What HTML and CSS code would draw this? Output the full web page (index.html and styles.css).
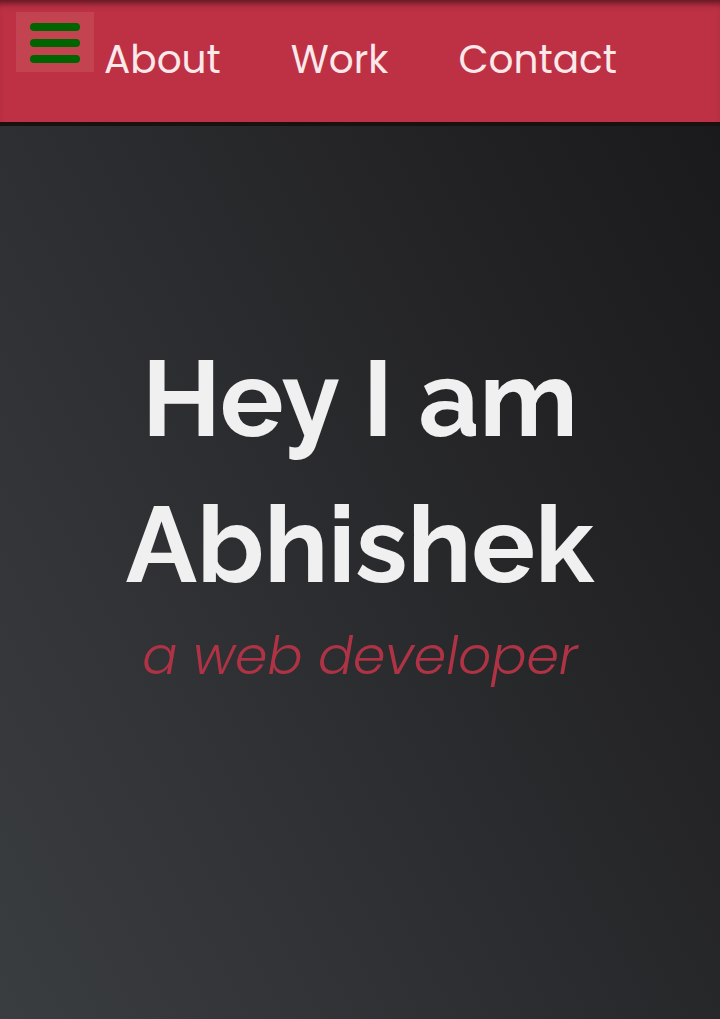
FILE: index.html
```html
<!DOCTYPE html>
<html lang="en">
<head>
<meta charset="utf-8">
<meta name="viewport" content="width=device-width, initial-scale=1">
<title>Abhishek</title>
<link rel="stylesheet" href="styles.css">
</head>
<body>
<header class="navbar">
  <button class="menu-toggle" type="button" aria-label="Menu">
    <span class="menu-bar"></span>
    <span class="menu-bar"></span>
    <span class="menu-bar"></span>
  </button>
  <nav class="nav-links">
    <a class="nav-link" href="#about">About</a>
    <a class="nav-link" href="#work">Work</a>
    <a class="nav-link" href="#contact">Contact</a>
  </nav>
</header>
<main class="hero">
  <h1 class="hero-title">Hey I am Abhishek</h1>
  <p class="hero-subtitle">a web developer</p>
</main>
</body>
</html>
```
FILE: styles.css
```css
* {
  box-sizing: border-box;
}

body {
  margin: 0;
  min-height: 100vh;
  display: flex;
  flex-direction: column;
  color: #f0f0f0;
  font-family: Poppins, Inter, sans-serif;
  background: linear-gradient(62deg, #3a3d40 0%, #181719 100%);
}

.navbar {
  display: flex;
  align-items: flex-start;
  gap: 10px;
  min-height: 122px;
  padding: 12px 16px;
  background: #be3144;
  box-shadow: 0 4px 0 #19110f, inset 0 8px 7px -5px #561520;
}

.menu-toggle {
  display: flex;
  flex-direction: column;
  gap: 8px;
  width: 78px;
  height: 60px;
  padding: 11px 14px 9px;
  border: 0;
  background: #c34450;
}

.menu-bar {
  height: 8px;
  border-radius: 4px;
  background: #006400;
}

.nav-links {
  display: flex;
  gap: 70px;
  padding-top: 18px;
}

.nav-link {
  color: #fae8ea;
  font-size: 39px;
  line-height: 60px;
  text-decoration: none;
}

.hero {
  flex: 1;
  display: flex;
  flex-direction: column;
  align-items: center;
  justify-content: center;
  padding-bottom: 122px;
  text-align: center;
}

.hero-title {
  max-width: 520px;
  margin: 0;
  font-family: Raleway, Lato, sans-serif;
  font-size: 106px;
  font-weight: 700;
  line-height: 146px;
}

.hero-subtitle {
  margin: 0;
  color: #b03345;
  font-size: 52px;
  font-style: italic;
  font-weight: 300;
  line-height: 76px;
}
```
